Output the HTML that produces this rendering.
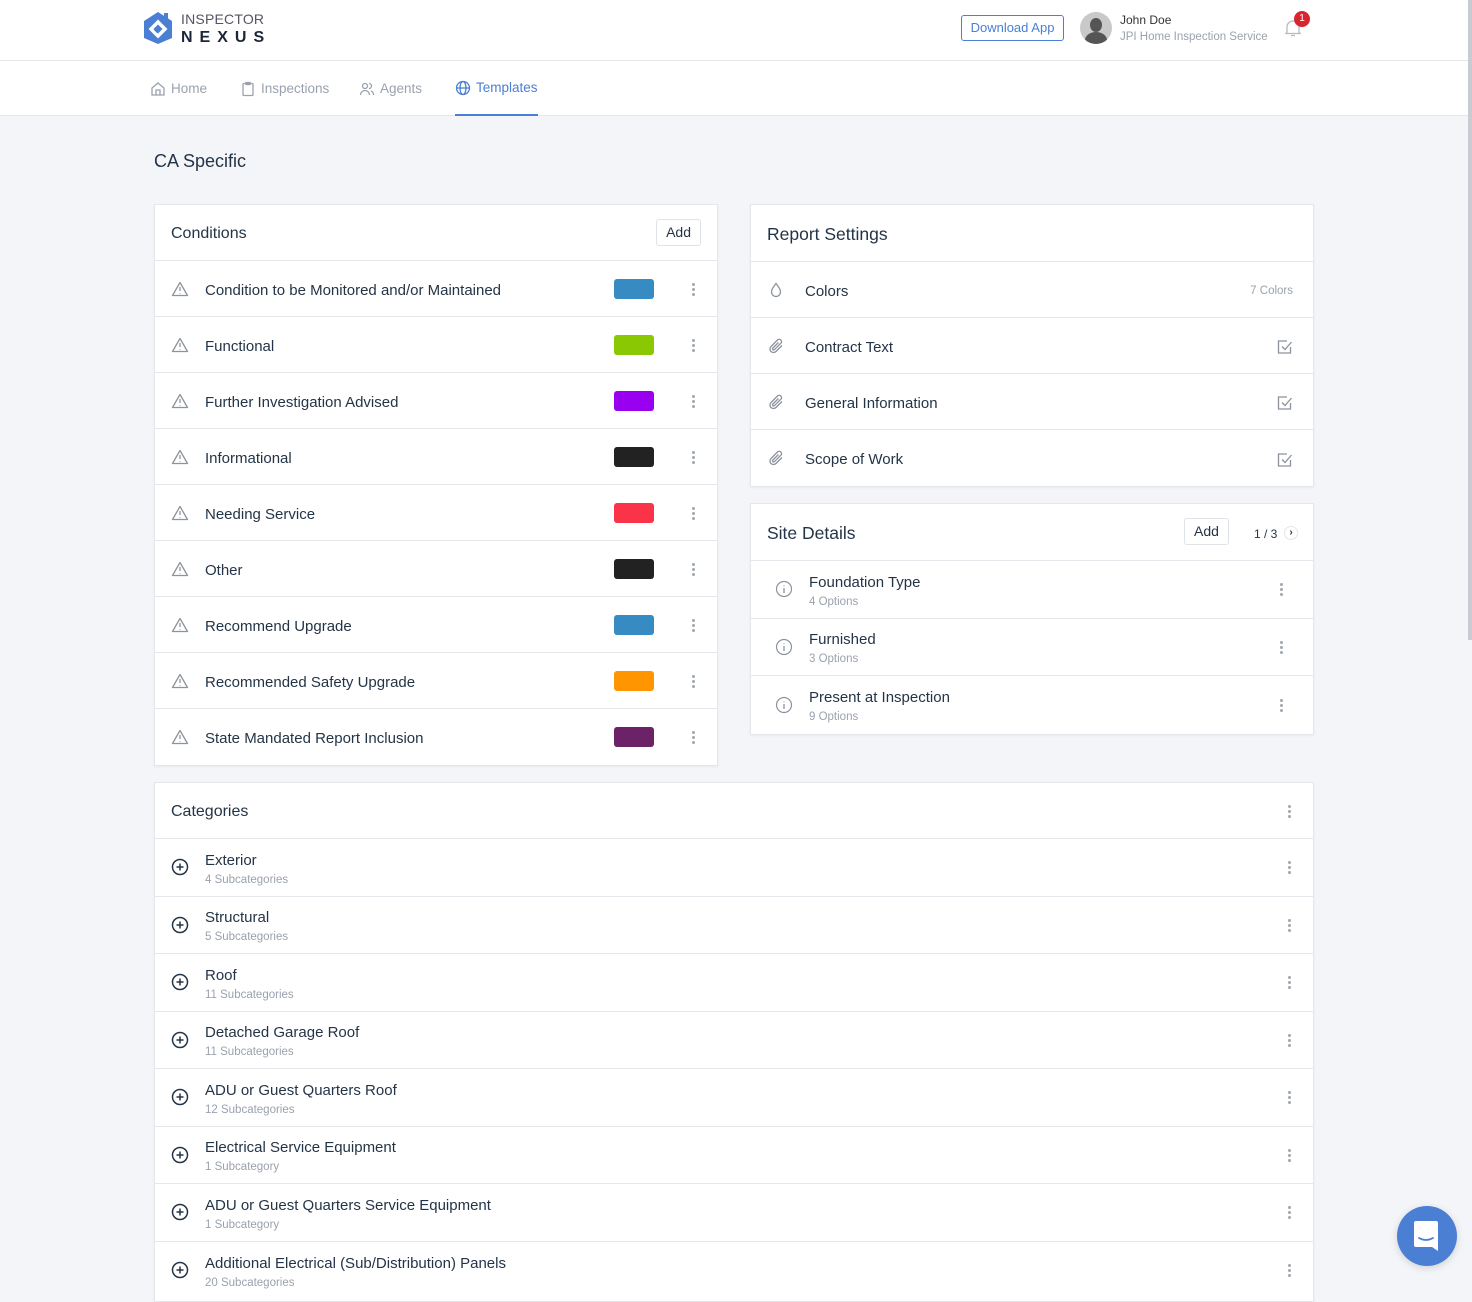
<!DOCTYPE html>
<html><head><meta charset="utf-8"><style>
*{box-sizing:border-box;margin:0;padding:0}
body{width:1472px;height:1279px;overflow:hidden;background:#f4f5f8;font-family:"Liberation Sans",sans-serif;color:#243447;position:relative}
.hdr{position:absolute;left:0;top:0;width:1468px;height:61px;background:#fff;border-bottom:1px solid #e3e6ea}
.nav{position:absolute;left:0;top:61px;width:1468px;height:55px;background:#fff;border-bottom:1px solid #e3e6ea}
.nav a{position:absolute;top:0;height:55px;line-height:54px;font-size:13.5px;color:#9aa2ad;text-decoration:none;display:flex;align-items:center;gap:5px}
.nav a svg{width:16px;height:16px}
.card{position:absolute;background:#fff;border:1px solid #e3e6ea;box-shadow:0 1px 2px rgba(0,0,0,.05)}
.ch{height:56px;border-bottom:1px solid #e3e6ea;display:flex;align-items:center;padding:3px 16px 0;font-size:16px;position:relative}
.row{height:56px;border-bottom:1px solid #e3e6ea;display:flex;align-items:center;position:relative;font-size:15px;padding-top:3px}
.row:last-child{border-bottom:none}
.ic{position:absolute;left:16px;top:50%;margin-top:-9px;width:18px;height:18px}
.lbl{position:absolute;left:50px}
.sw{position:absolute;left:459px;width:40px;height:20px;border-radius:3px;top:18px}
.dots{position:absolute;width:3px;top:50%;margin-top:-6px}
.dots i{display:block;width:3px;height:3px;border-radius:50%;background:#a0a7b0;margin-bottom:2px}
.btn{position:absolute;border:1px solid #dfe3e8;border-radius:3px;background:#fff;font-size:14px;height:27px;line-height:25px;padding:0 9px}
.sub{font-size:11.5px;color:#9aa2ad;margin-top:5px}
.r2{height:57.5px}
</style></head><body>
<div class="hdr">
 <svg style="position:absolute;left:142px;top:11px" width="32" height="34" viewBox="0 0 32 34"><path d="M16 1 L30 10 V27 L16 33 L2 27 V10 Z" fill="#4a7fd4"/><rect x="22" y="2" width="4" height="7" fill="#4a7fd4"/><path d="M16 11 L23 18 L16 25 L9 18 Z" fill="none" stroke="#fff" stroke-width="3.5"/><path d="M13 18 L16 21" stroke="#4a7fd4" stroke-width="3"/></svg>
 <div style="position:absolute;left:181px;top:11px;font-size:14px;color:#556;letter-spacing:0.2px">INSPECTOR</div>
 <div style="position:absolute;left:181px;top:29px;font-size:16px;font-weight:bold;color:#1b2637;letter-spacing:7px">NEXUS</div>
 <div style="position:absolute;left:961px;top:15px;width:103px;height:26px;border:1px solid #4a7fd4;border-radius:3px;color:#4a7fd4;font-size:13px;line-height:24px;text-align:center">Download App</div>
 <div style="position:absolute;left:1080px;top:12px;width:32px;height:32px;border-radius:50%;background:#c9c9c9;overflow:hidden"><div style="position:absolute;left:10px;top:6px;width:12px;height:14px;border-radius:50%;background:#555"></div><div style="position:absolute;left:5px;top:20px;width:22px;height:16px;border-radius:50% 50% 0 0;background:#555"></div></div>
 <div style="position:absolute;left:1120px;top:13px;font-size:12px;color:#333">John Doe</div>
 <div style="position:absolute;left:1120px;top:31px;font-size:11.5px;color:#9aa2ad">JPI Home Inspection Service</div>
 <svg style="position:absolute;left:1284px;top:18px" width="18" height="20" viewBox="0 0 18 20"><path d="M3 14 V9 a6 6 0 0 1 12 0 V14 L16 15.5 H2 Z M7 17.5 h4" fill="none" stroke="#b5bac2" stroke-width="1.3"/></svg>
 <div style="position:absolute;left:1294px;top:11px;width:16px;height:16px;border-radius:50%;background:#d9262e;color:#fff;font-size:10px;line-height:16px;text-align:center">1</div>
</div>
<div class="nav">
 <a style="left:150px"><svg viewBox="0 0 16 16" fill="none" stroke="#9aa2ad" stroke-width="1.3"><path d="M2 7 L8 2 L14 7 V14 H2 Z M6 14 V9 H10 V14"/></svg>Home</a>
 <a style="left:240px"><svg viewBox="0 0 16 16" fill="none" stroke="#9aa2ad" stroke-width="1.3"><rect x="3" y="2.5" width="10" height="12" rx="1"/><rect x="6" y="1.5" width="4" height="2"/></svg>Inspections</a>
 <a style="left:359px"><svg viewBox="0 0 16 16" fill="none" stroke="#9aa2ad" stroke-width="1.3"><circle cx="6" cy="5" r="2.5"/><path d="M1.5 14 a4.5 4.5 0 0 1 9 0 M10 2.5 a2.5 2.5 0 0 1 0 5 M12 10 a4 4 0 0 1 2.5 4"/></svg>Agents</a>
 <a style="left:455px;color:#4a7fd4;border-bottom:2px solid #4a7fd4"><svg viewBox="0 0 16 16" fill="none" stroke="#4a7fd4" stroke-width="1.3"><circle cx="8" cy="8" r="6.5"/><ellipse cx="8" cy="8" rx="3" ry="6.5"/><path d="M1.5 8 H14.5"/></svg>Templates</a>
</div>
<div style="position:absolute;left:1468px;top:0;width:4px;height:640px;background:#c8ccd2"></div>
<div style="position:absolute;left:154px;top:151px;font-size:18px">CA Specific</div>

<svg width="0" height="0" style="position:absolute"><defs>
<symbol id="tri" viewBox="0 0 18 18"><path d="M9 2.5 L16.5 15.5 H1.5 Z M9 7 V11 M9 13 V13.6" fill="none" stroke="#8c939d" stroke-width="1.3" stroke-linejoin="round"/></symbol>
<symbol id="clip" viewBox="0 0 18 18"><path d="M15 8.5 L9 14.5 a3.5 3.5 0 0 1 -5 -5 L10.5 3 a2.3 2.3 0 0 1 3.3 3.3 L7.5 12.6 a1.1 1.1 0 0 1 -1.6 -1.6 L11.5 5.5" fill="none" stroke="#8c939d" stroke-width="1.3"/></symbol>
<symbol id="chk" viewBox="0 0 18 18"><path d="M14.5 9 V15 H2.5 V3 H11" fill="none" stroke="#8c939d" stroke-width="1.3"/><path d="M6 8.5 L9 11.5 L15.5 4" fill="none" stroke="#8c939d" stroke-width="1.3"/></symbol>
<symbol id="info" viewBox="0 0 18 18"><circle cx="9" cy="9" r="7.5" fill="none" stroke="#8c939d" stroke-width="1.2"/><path d="M9 8 V13 M9 5.5 V6.2" stroke="#8c939d" stroke-width="1.3"/></symbol>
<symbol id="plus" viewBox="0 0 18 18"><circle cx="9" cy="9" r="7.5" fill="none" stroke="#243447" stroke-width="1.5"/><path d="M9 5.5 V12.5 M5.5 9 H12.5" stroke="#243447" stroke-width="1.5"/></symbol>
</defs></svg>

<div class="card" style="left:154px;top:204px;width:564px;height:562px">
 <div class="ch">Conditions<div class="btn" style="right:16px;top:14px">Add</div></div>
 <div class="row"><svg class="ic"><use href="#tri"/></svg><span class="lbl">Condition to be Monitored and/or Maintained</span><div class="sw" style="background:#368bc3"></div><div class="dots" style="left:537px"><i></i><i></i><i></i></div></div>
 <div class="row"><svg class="ic"><use href="#tri"/></svg><span class="lbl">Functional</span><div class="sw" style="background:#8ac804"></div><div class="dots" style="left:537px"><i></i><i></i><i></i></div></div>
 <div class="row"><svg class="ic"><use href="#tri"/></svg><span class="lbl">Further Investigation Advised</span><div class="sw" style="background:#9900ef"></div><div class="dots" style="left:537px"><i></i><i></i><i></i></div></div>
 <div class="row"><svg class="ic"><use href="#tri"/></svg><span class="lbl">Informational</span><div class="sw" style="background:#222"></div><div class="dots" style="left:537px"><i></i><i></i><i></i></div></div>
 <div class="row"><svg class="ic"><use href="#tri"/></svg><span class="lbl">Needing Service</span><div class="sw" style="background:#fb3348"></div><div class="dots" style="left:537px"><i></i><i></i><i></i></div></div>
 <div class="row"><svg class="ic"><use href="#tri"/></svg><span class="lbl">Other</span><div class="sw" style="background:#222"></div><div class="dots" style="left:537px"><i></i><i></i><i></i></div></div>
 <div class="row"><svg class="ic"><use href="#tri"/></svg><span class="lbl">Recommend Upgrade</span><div class="sw" style="background:#368bc3"></div><div class="dots" style="left:537px"><i></i><i></i><i></i></div></div>
 <div class="row"><svg class="ic"><use href="#tri"/></svg><span class="lbl">Recommended Safety Upgrade</span><div class="sw" style="background:#ff9500"></div><div class="dots" style="left:537px"><i></i><i></i><i></i></div></div>
 <div class="row"><svg class="ic"><use href="#tri"/></svg><span class="lbl">State Mandated Report Inclusion</span><div class="sw" style="background:#6b2266"></div><div class="dots" style="left:537px"><i></i><i></i><i></i></div></div>
</div>

<div class="card" style="left:750px;top:204px;width:564px;height:283px">
 <div class="ch" style="font-size:17.5px;height:57px">Report Settings</div>
 <div class="row"><svg class="ic" viewBox="0 0 18 18"><path d="M9 2.5 C6 6.5 4.5 8.5 4.5 11 a4.5 4.5 0 0 0 9 0 C13.5 8.5 12 6.5 9 2.5 Z" fill="none" stroke="#8c939d" stroke-width="1.3"/></svg><span class="lbl" style="left:54px">Colors</span><span style="position:absolute;right:20px;font-size:11.5px;color:#9aa2ad">7 Colors</span></div>
 <div class="row"><svg class="ic"><use href="#clip"/></svg><span class="lbl" style="left:54px">Contract Text</span><svg style="position:absolute;right:19px;width:18px;height:18px"><use href="#chk"/></svg></div>
 <div class="row"><svg class="ic"><use href="#clip"/></svg><span class="lbl" style="left:54px">General Information</span><svg style="position:absolute;right:19px;width:18px;height:18px"><use href="#chk"/></svg></div>
 <div class="row"><svg class="ic"><use href="#clip"/></svg><span class="lbl" style="left:54px">Scope of Work</span><svg style="position:absolute;right:19px;width:18px;height:18px"><use href="#chk"/></svg></div>
</div>

<div class="card" style="left:750px;top:503px;width:564px;height:232px">
 <div class="ch" style="font-size:17.5px;height:57px">Site Details<div class="btn" style="left:433px;top:14px">Add</div><span style="position:absolute;left:503px;font-size:12px">1 / 3</span><div style="position:absolute;left:533px;top:22px;width:14px;height:14px;border:1px solid #e3e6ea;border-radius:50%;font-size:10px;line-height:12px;text-align:center;font-weight:bold">›</div></div>
 <div class="row r2"><svg class="ic" style="left:24px"><use href="#info"/></svg><div class="lbl" style="left:58px"><div>Foundation Type</div><div class="sub">4 Options</div></div><div class="dots" style="left:529px"><i></i><i></i><i></i></div></div>
 <div class="row r2"><svg class="ic" style="left:24px"><use href="#info"/></svg><div class="lbl" style="left:58px"><div>Furnished</div><div class="sub">3 Options</div></div><div class="dots" style="left:529px"><i></i><i></i><i></i></div></div>
 <div class="row r2"><svg class="ic" style="left:24px"><use href="#info"/></svg><div class="lbl" style="left:58px"><div>Present at Inspection</div><div class="sub">9 Options</div></div><div class="dots" style="left:529px"><i></i><i></i><i></i></div></div>
</div>

<div class="card" style="left:154px;top:782px;width:1160px;height:520px">
 <div class="ch">Categories<div class="dots" style="left:1133px"><i></i><i></i><i></i></div></div>
 <div class="row r2"><svg class="ic"><use href="#plus"/></svg><div class="lbl"><div>Exterior</div><div class="sub">4 Subcategories</div></div><div class="dots" style="left:1133px"><i></i><i></i><i></i></div></div>
 <div class="row r2"><svg class="ic"><use href="#plus"/></svg><div class="lbl"><div>Structural</div><div class="sub">5 Subcategories</div></div><div class="dots" style="left:1133px"><i></i><i></i><i></i></div></div>
 <div class="row r2"><svg class="ic"><use href="#plus"/></svg><div class="lbl"><div>Roof</div><div class="sub">11 Subcategories</div></div><div class="dots" style="left:1133px"><i></i><i></i><i></i></div></div>
 <div class="row r2"><svg class="ic"><use href="#plus"/></svg><div class="lbl"><div>Detached Garage Roof</div><div class="sub">11 Subcategories</div></div><div class="dots" style="left:1133px"><i></i><i></i><i></i></div></div>
 <div class="row r2"><svg class="ic"><use href="#plus"/></svg><div class="lbl"><div>ADU or Guest Quarters Roof</div><div class="sub">12 Subcategories</div></div><div class="dots" style="left:1133px"><i></i><i></i><i></i></div></div>
 <div class="row r2"><svg class="ic"><use href="#plus"/></svg><div class="lbl"><div>Electrical Service Equipment</div><div class="sub">1 Subcategory</div></div><div class="dots" style="left:1133px"><i></i><i></i><i></i></div></div>
 <div class="row r2"><svg class="ic"><use href="#plus"/></svg><div class="lbl"><div>ADU or Guest Quarters Service Equipment</div><div class="sub">1 Subcategory</div></div><div class="dots" style="left:1133px"><i></i><i></i><i></i></div></div>
 <div class="row r2"><svg class="ic"><use href="#plus"/></svg><div class="lbl"><div>Additional Electrical (Sub/Distribution) Panels</div><div class="sub">20 Subcategories</div></div><div class="dots" style="left:1133px"><i></i><i></i><i></i></div></div>
</div>

<div style="position:absolute;left:1397px;top:1206px;width:60px;height:60px;border-radius:50%;background:#4a7fd4;box-shadow:0 2px 8px rgba(0,0,0,.15)">
 <svg width="60" height="60" viewBox="0 0 60 60"><path d="M19 15 H39 a2 2 0 0 1 2 2 V45 L35 41 H19 a2 2 0 0 1 -2 -2 V17 a2 2 0 0 1 2 -2 Z" fill="#fff"/><path d="M22 32 Q29 36 36 32" fill="none" stroke="#4a7fd4" stroke-width="1.8" stroke-linecap="round"/></svg>
</div>
</body></html>
